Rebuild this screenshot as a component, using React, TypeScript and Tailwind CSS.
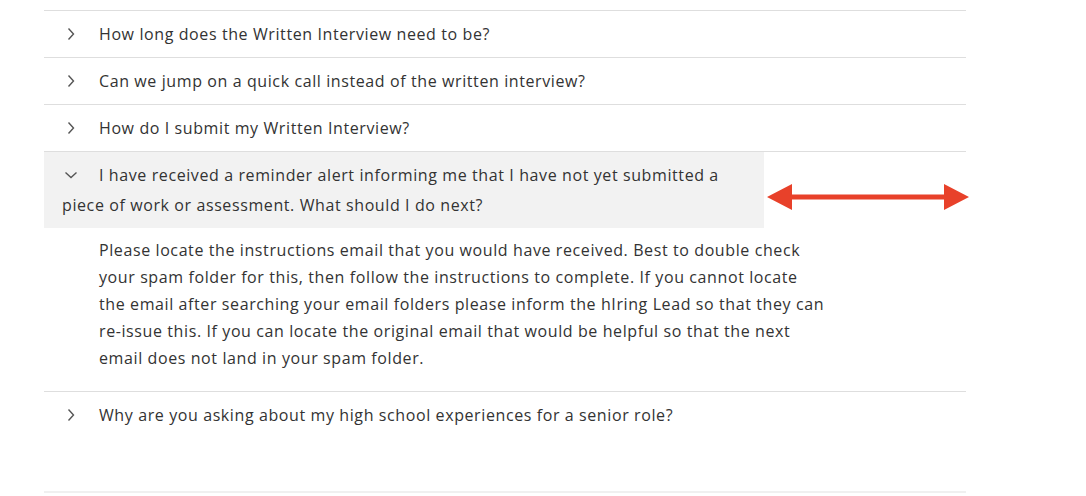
import { useState } from "react";

// FAQ accordion, one item open, with a red width marker next to the open header.

type Item = { q: string; a?: string };

const items: Item[] = [
  { q: "How long does the Written Interview need to be?" },
  { q: "Can we jump on a quick call instead of the written interview?" },
  { q: "How do I submit my Written Interview?" },
  {
    q: "I have received a reminder alert informing me that I have not yet submitted a piece of work or assessment. What should I do next?",
    a: "Please locate the instructions email that you would have received. Best to double check your spam folder for this, then follow the instructions to complete. If you cannot locate the email after searching your email folders please inform the hIring Lead so that they can re-issue this. If you can locate the original email that would be helpful so that the next email does not land in your spam folder.",
  },
  { q: "Why are you asking about my high school experiences for a senior role?" },
];

function Chevron({ open }: { open: boolean }) {
  return (
    <span className="inline-block w-[37px] align-middle">
      <svg
        width="14"
        height="14"
        viewBox="0 0 14 14"
        className="ml-[2px] -mt-[3px] text-[#555]"
        fill="none"
        stroke="currentColor"
        strokeWidth="1.4"
      >
        {open ? <path d="M1.5 4.5 L7 9.5 L12.5 4.5" /> : <path d="M4.5 1.5 L9.5 7 L4.5 12.5" />}
      </svg>
    </span>
  );
}

function Arrow() {
  return (
    <svg width="202" height="28" viewBox="0 0 202 28" className="absolute left-[767px] top-[183px]">
      <path d="M0 14 L25 1 L25 11.5 L177 11.5 L177 1 L202 14 L177 27 L177 16.5 L25 16.5 L25 27 Z" fill="#e8412a" />
    </svg>
  );
}

export default function App() {
  const [open, setOpen] = useState(3);

  return (
    <div
      className="relative min-h-[496px] bg-white pt-[10px] text-[16px] tracking-[0.6px] text-[#333]"
      style={{ fontFamily: '"Open Sans", sans-serif' }}
    >
      <div className="ml-[44px] w-[922px]">
        {items.map((item, i) => {
          const isOpen = open === i;
          return (
            <div key={i} className="border-t border-[#dedede]">
              <button
                onClick={() => setOpen(isOpen ? -1 : i)}
                className={
                  "block w-[720px] py-2 pl-[18px] pr-[40px] text-left leading-[30px] " +
                  (isOpen ? "bg-[#f2f2f2]" : "")
                }
              >
                <Chevron open={isOpen} />
                {item.q}
              </button>
              {isOpen && item.a && (
                <p className="w-[782px] pb-[19px] pl-[55px] pt-[9px] leading-[27px]">{item.a}</p>
              )}
            </div>
          );
        })}
        <div className="h-[53px]" />
        <div className="border-t-2 border-[#f0f0f0]" />
      </div>
      <Arrow />
    </div>
  );
}
